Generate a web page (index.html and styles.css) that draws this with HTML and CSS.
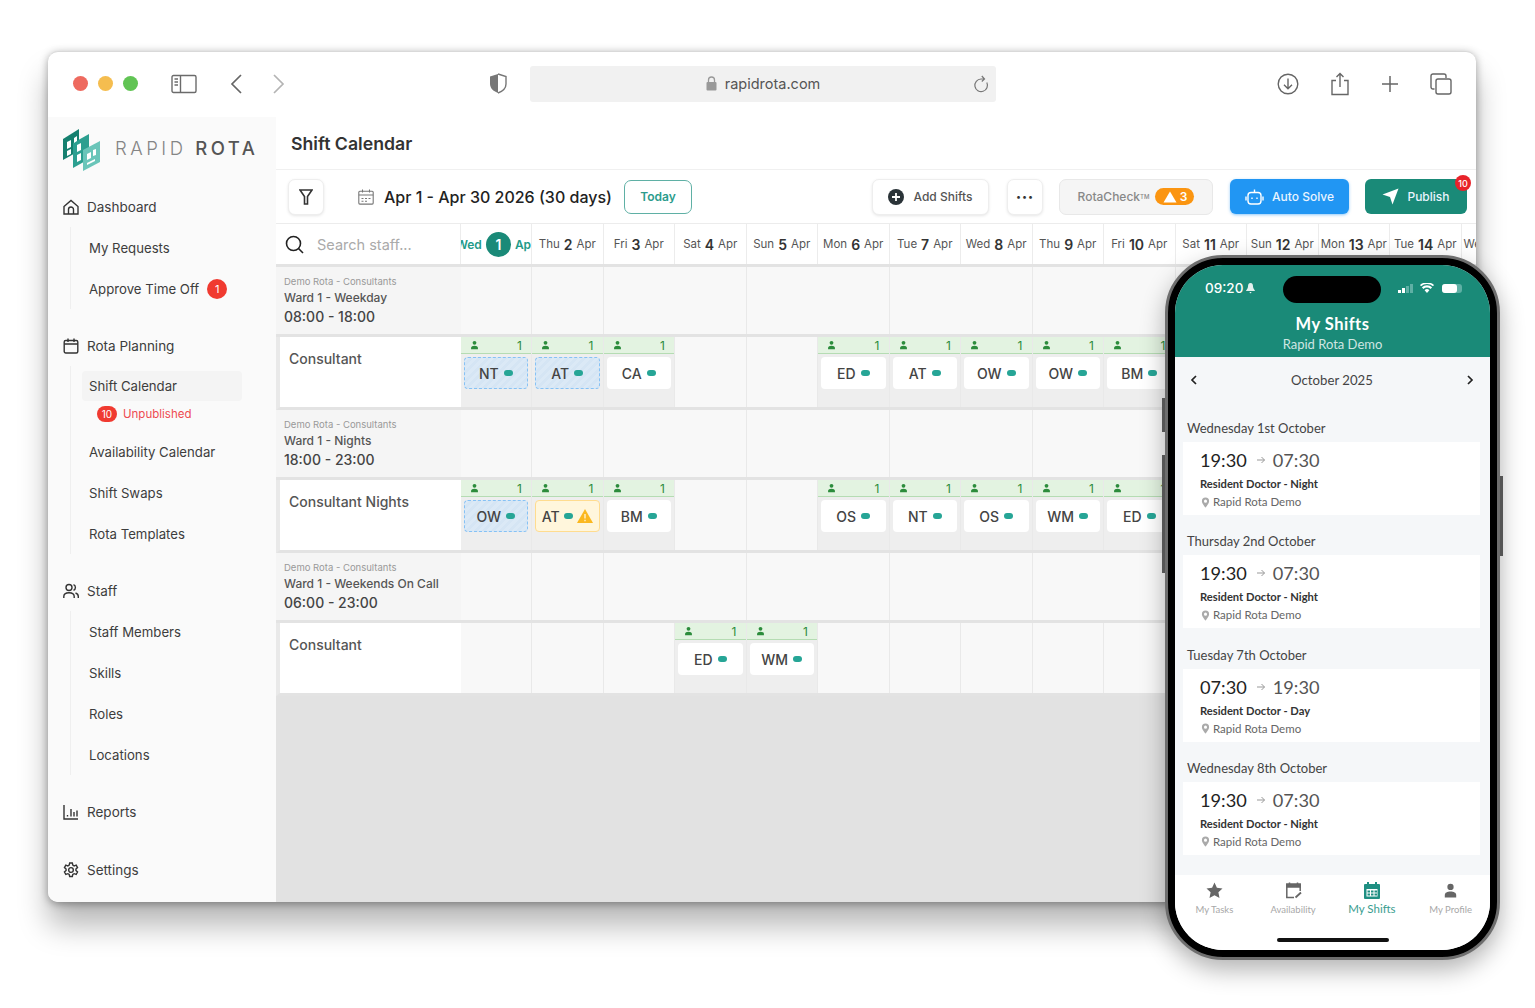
FILE: index.html
```html
<!DOCTYPE html>
<html lang="en">
<head>
  <meta charset="UTF-8">
  <meta name="viewport" content="width=device-width, initial-scale=1.0">
  <title>Rapid Rota - Shift Calendar</title>
  <link rel="stylesheet" href="styles.css">
</head>
<body>

  <!-- shared small icons -->
  <svg class="sprite" aria-hidden="true">
    <symbol id="person" viewBox="0 0 10 10">
      <circle cx="5" cy="2.6" r="2.1"/>
      <path d="M1.2 9.6V8c0-1.5 1.7-2.3 3.8-2.3S8.800 6.500 8.800 8v1.600z"/>
    </symbol>
    <symbol id="pin" viewBox="0 0 10 12">
      <path fill-rule="evenodd" d="M5 .5a4 4 0 0 1 4 4c0 2.800-4 7-4 7s-4-4.200-4-7a4 4 0 0 1 4-4zm0 2.300a1.700 1.700 0 1 0 0 3.400 1.700 1.700 0 0 0 0-3.400z"/>
    </symbol>
    <symbol id="arrow" viewBox="0 0 10 10">
      <path d="M1 5h7.500M5.500 2l3 3-3 3" fill="none" stroke="currentColor" stroke-width="1"/>
    </symbol>
  </svg>

  <div class="page">
    <div class="window">

      <!-- browser bar -->
      <div class="browser-bar">
        <div class="lights">
          <span class="light red"></span>
          <span class="light yellow"></span>
          <span class="light green"></span>
        </div>
        <svg class="bar-icon sidebar-toggle" width="26" height="20" viewBox="0 0 26 20" fill="none" stroke="#6b6b6b" stroke-width="1.400">
          <rect x="1" y="1.500" width="24" height="17" rx="1.500"/>
          <path d="M9.500 1.500v17M3.500 5h3.500M3.500 8h3.500M3.500 11h3.500" />
        </svg>
        <svg class="bar-icon back" width="12" height="20" viewBox="0 0 12 20" fill="none" stroke="#666" stroke-width="1.700">
          <path d="M11 1 2 10l9 9"/>
        </svg>
        <svg class="bar-icon forward" width="12" height="20" viewBox="0 0 12 20" fill="none" stroke="#b4b4b4" stroke-width="1.700">
          <path d="m1 1 9 9-9 9"/>
        </svg>
        <svg class="bar-icon shield" width="18" height="21" viewBox="0 0 18 21">
          <path d="M9 1 1 3.500V11c0 4.500 4 7.500 8 9z" fill="#777"/>
          <path d="M9 1l8 2.500V11c0 4.500-4 7.500-8 9" fill="none" stroke="#777" stroke-width="1.400"/>
        </svg>
        <div class="url-bar">
          <svg width="11" height="15" viewBox="0 0 11 15">
            <path d="M2.500 6.500V4a3 3 0 0 1 6 0v2.500" fill="none" stroke="#999" stroke-width="1.300"/>
            <rect x="0.500" y="6" width="10" height="8.500" rx="1" fill="#999"/>
          </svg>
          <span>rapidrota.com</span>
          <svg class="reload" width="16" height="18" viewBox="0 0 16 18" fill="none" stroke="#777" stroke-width="1.200">
            <path d="M13.800 7.500A6.300 6.300 0 1 1 8 4h3M8.800 1 11.500 4 8.800 6.500"/>
          </svg>
        </div>
        <div class="bar-right">
          <svg width="22" height="22" viewBox="0 0 22 22" fill="none" stroke="#666" stroke-width="1.400">
            <circle cx="11" cy="11" r="9.800"/>
            <path d="M11 5.500v10M7 11.800l4 4 4-4"/>
          </svg>
          <svg width="20" height="24" viewBox="0 0 20 24" fill="none" stroke="#666" stroke-width="1.400">
            <path d="M6 8.500H2v14h16v-14h-4M10 15V1.500M6.500 5 10 1.500 13.500 5"/>
          </svg>
          <svg width="18" height="18" viewBox="0 0 18 18" fill="none" stroke="#666" stroke-width="1.500">
            <path d="M9 1v16M1 9h16"/>
          </svg>
          <svg width="22" height="22" viewBox="0 0 22 22" fill="none" stroke="#666" stroke-width="1.400">
            <path d="M4.500 16H3a2 2 0 0 1-2-2V3a2 2 0 0 1 2-2h11a2 2 0 0 1 2 2v2"/>
            <rect x="6" y="6" width="15" height="15" rx="2"/>
          </svg>
        </div>
      </div>

      <div class="app">

        <!-- sidebar -->
        <aside class="sidebar">
          <div class="brand">
            <svg width="40" height="44" viewBox="0 0 40 44">
              <path d="M1 11 17 1v22L1 32z" fill="#15806f"/>
              <path d="M11 15 27 6v25l-16 9z" fill="#2c9f90"/>
              <path d="M21 22 38 13v21L21 43z" fill="#6ac5b9"/>
              <path d="M5 14l4-2v7l-4 2zM5 23l4-2v5l-4 2zM12 10l3-2v5l-3 2zM15 17l4-2v7l-4 2zM15 27l4-2v7l-4 2zM25 26l4-2v6l-4 2zM25 35l8-4v2l-8 4zM31 22l3-1v6l-3 1z" fill="#fff"/>
            </svg>
            <div class="brand-name">RAPID <b>ROTA</b></div>
          </div>

          <div class="nav-head">
            <svg width="16" height="16" viewBox="0 0 16 16" fill="none" stroke="#333" stroke-width="1.400">
              <path d="M1 7.500 8 1.500l7 6V15H1zM5.500 15v-4.500a2.500 2.500 0 0 1 5 0V15"/>
            </svg>
            <span>Dashboard</span>
          </div>
          <div class="nav-subs">
            <div class="nav-sub">My Requests</div>
            <div class="nav-sub">Approve Time Off <span class="nav-badge">1</span></div>
          </div>

          <div class="nav-head">
            <svg width="16" height="16" viewBox="0 0 16 16" fill="none" stroke="#333" stroke-width="1.400">
              <rect x="1.200" y="2.500" width="13.600" height="12.500" rx="1.500"/>
              <path d="M1.200 6h13.600M5 .5v3.500M11 .5v3.500"/>
            </svg>
            <span>Rota Planning</span>
          </div>
          <div class="nav-subs">
            <div class="nav-sub-block">
              <div class="nav-sub current">Shift Calendar</div>
              <div class="unpublished"><span class="count">10</span> Unpublished</div>
            </div>
            <div class="nav-sub">Availability Calendar</div>
            <div class="nav-sub">Shift Swaps</div>
            <div class="nav-sub">Rota Templates</div>
          </div>

          <div class="nav-head">
            <svg width="16" height="16" viewBox="0 0 16 16" fill="none" stroke="#333" stroke-width="1.400">
              <circle cx="6" cy="4.500" r="3"/>
              <path d="M.800 15v-1.500C.800 11 3 9.700 6 9.700s5.200 1.300 5.200 3.800V15M10.500 1.700a3 3 0 0 1 0 5.600M12.500 10c1.700.6 2.800 1.800 2.800 3.500V15"/>
            </svg>
            <span>Staff</span>
          </div>
          <div class="nav-subs">
            <div class="nav-sub">Staff Members</div>
            <div class="nav-sub">Skills</div>
            <div class="nav-sub">Roles</div>
            <div class="nav-sub">Locations</div>
          </div>

          <div class="nav-head reports">
            <svg width="16" height="16" viewBox="0 0 16 16" fill="none" stroke="#333" stroke-width="1.400">
              <path d="M1 1v14h14M4.500 11v1.500M8 5v7.500M11 8v4.500M14 6.500v6"/>
            </svg>
            <span>Reports</span>
          </div>
          <div class="nav-head">
            <svg width="16" height="16" viewBox="0 0 24 24" fill="none" stroke="#333" stroke-width="2.100">
              <circle cx="12" cy="12" r="3.500"/>
              <path d="M10 1.500h4l.7 3.200 2 1.100 3.100-1 2 3.500-2.400 2.200v2.300l2.400 2.200-2 3.500-3.100-1-2 1.100-.7 3.200h-4l-.7-3.200-2-1.100-3.100 1-2-3.500 2.400-2.200V10.500L2.200 8.300l2-3.500 3.100 1 2-1.100z"/>
            </svg>
            <span>Settings</span>
          </div>
        </aside>

        <main class="main">
          <div class="title-row">Shift Calendar</div>

          <div class="controls">
            <button class="btn filter">
              <svg width="14" height="16" viewBox="0 0 14 16" fill="none" stroke="#333" stroke-width="1.600">
                <path d="M1 1h12L8.500 7.500V15h-3V7.500z"/>
              </svg>
            </button>
            <svg class="date-icon" width="16" height="16" viewBox="0 0 16 16" fill="none" stroke="#777" stroke-width="1.100">
              <rect x="0.800" y="2.300" width="14.400" height="12.800" rx="1"/>
              <path d="M.8 6h14.400M4.500 .5v3M11.500 .5v3M3.500 9.500h2M7 9.500h2M10.500 9.500h2M3.500 12.300h2M7 12.300h2"/>
            </svg>
            <div class="date-range">Apr 1 - Apr 30 2026 (30 days)</div>
            <button class="today">Today</button>
            <button class="btn add-shifts">
              <svg width="16" height="16" viewBox="0 0 16 16">
                <circle cx="8" cy="8" r="8" fill="#2a3338"/>
                <path d="M8 4v8M4 8h8" stroke="#fff" stroke-width="1.800"/>
              </svg>
              Add Shifts
            </button>
            <button class="btn more">&bull;&bull;&bull;</button>
            <button class="rotacheck">RotaCheck<sup>TM</sup>
              <span class="warn-pill">
                <svg width="14" height="12" viewBox="0 0 14 12"><path d="M7 .5 13.500 11.500H.5z" fill="#fff"/></svg>
                3
              </span>
            </button>
            <button class="auto-solve">
              <svg width="19" height="18" viewBox="0 0 19 18" fill="none" stroke="#fff" stroke-width="1.400">
                <rect x="3" y="4.500" width="13" height="11.500" rx="3"/>
                <path d="M9.500 4.500V1.500M1 8.500v4M18 8.500v4M7 9.500v1.500M12 9.500v1.500"/>
              </svg>
              Auto Solve
            </button>
            <button class="publish">
              <svg width="17" height="17" viewBox="0 0 17 17"><path d="M16.500.5 10.500 16.500 8 9 .5 6.500z" fill="#fff"/></svg>
              Publish
              <span class="publish-badge">10</span>
            </button>
          </div>

          <div class="head-row">
            <div class="search">
              <svg width="19" height="19" viewBox="0 0 19 19" fill="none" stroke="#222" stroke-width="1.600">
                <circle cx="8.500" cy="8.500" r="7"/>
                <path d="m13.500 13.500 4.500 4.500"/>
              </svg>
              <span>Search staff...</span>
            </div>
            <div class="day today-col">Wed <b>1</b> Apr</div>
            <div class="day">Thu <b>2</b> Apr</div>
            <div class="day">Fri <b>3</b> Apr</div>
            <div class="day">Sat <b>4</b> Apr</div>
            <div class="day">Sun <b>5</b> Apr</div>
            <div class="day">Mon <b>6</b> Apr</div>
            <div class="day">Tue <b>7</b> Apr</div>
            <div class="day">Wed <b>8</b> Apr</div>
            <div class="day">Thu <b>9</b> Apr</div>
            <div class="day">Fri <b>10</b> Apr</div>
            <div class="day">Sat <b>11</b> Apr</div>
            <div class="day">Sun <b>12</b> Apr</div>
            <div class="day">Mon <b>13</b> Apr</div>
            <div class="day">Tue <b>14</b> Apr</div>
            <div class="day">Wed <b>15</b> Apr</div>
          </div>

          <!-- Ward 1 - Weekday -->
          <div class="ward-row">
            <div class="ward-label">
              <div class="ward-rota">Demo Rota - Consultants</div>
              <div class="ward-name">Ward 1 - Weekday</div>
              <div class="ward-time">08:00 - 18:00</div>
            </div>
            <div class="ward-days"></div>
          </div>
          <div class="shift-row">
            <div class="role">Consultant</div>
            <div class="cell filled">
              <div class="need"><svg><use href="#person"/></svg><span>1</span></div>
              <div class="pill draft">NT <i></i></div>
            </div>
            <div class="cell filled">
              <div class="need"><svg><use href="#person"/></svg><span>1</span></div>
              <div class="pill draft">AT <i></i></div>
            </div>
            <div class="cell filled">
              <div class="need"><svg><use href="#person"/></svg><span>1</span></div>
              <div class="pill">CA <i></i></div>
            </div>
            <div class="cell"></div>
            <div class="cell"></div>
            <div class="cell filled">
              <div class="need"><svg><use href="#person"/></svg><span>1</span></div>
              <div class="pill">ED <i></i></div>
            </div>
            <div class="cell filled">
              <div class="need"><svg><use href="#person"/></svg><span>1</span></div>
              <div class="pill">AT <i></i></div>
            </div>
            <div class="cell filled">
              <div class="need"><svg><use href="#person"/></svg><span>1</span></div>
              <div class="pill">OW <i></i></div>
            </div>
            <div class="cell filled">
              <div class="need"><svg><use href="#person"/></svg><span>1</span></div>
              <div class="pill">OW <i></i></div>
            </div>
            <div class="cell filled">
              <div class="need"><svg><use href="#person"/></svg><span>1</span></div>
              <div class="pill">BM <i></i></div>
            </div>
          </div>

          <!-- Ward 1 - Nights -->
          <div class="ward-row">
            <div class="ward-label">
              <div class="ward-rota">Demo Rota - Consultants</div>
              <div class="ward-name">Ward 1 - Nights</div>
              <div class="ward-time">18:00 - 23:00</div>
            </div>
            <div class="ward-days"></div>
          </div>
          <div class="shift-row">
            <div class="role">Consultant Nights</div>
            <div class="cell filled">
              <div class="need"><svg><use href="#person"/></svg><span>1</span></div>
              <div class="pill draft">OW <i></i></div>
            </div>
            <div class="cell filled">
              <div class="need"><svg><use href="#person"/></svg><span>1</span></div>
              <div class="pill warning">AT <i></i>
                <svg width="16" height="14" viewBox="0 0 16 14">
                  <path d="M8 0 16 14H0z" fill="#fbb81f"/>
                  <path d="M8 5v4.500M8 10.800v1.400" stroke="#fff6dc" stroke-width="1.300"/>
                </svg>
              </div>
            </div>
            <div class="cell filled">
              <div class="need"><svg><use href="#person"/></svg><span>1</span></div>
              <div class="pill">BM <i></i></div>
            </div>
            <div class="cell"></div>
            <div class="cell"></div>
            <div class="cell filled">
              <div class="need"><svg><use href="#person"/></svg><span>1</span></div>
              <div class="pill">OS <i></i></div>
            </div>
            <div class="cell filled">
              <div class="need"><svg><use href="#person"/></svg><span>1</span></div>
              <div class="pill">NT <i></i></div>
            </div>
            <div class="cell filled">
              <div class="need"><svg><use href="#person"/></svg><span>1</span></div>
              <div class="pill">OS <i></i></div>
            </div>
            <div class="cell filled">
              <div class="need"><svg><use href="#person"/></svg><span>1</span></div>
              <div class="pill">WM <i></i></div>
            </div>
            <div class="cell filled">
              <div class="need"><svg><use href="#person"/></svg><span>1</span></div>
              <div class="pill">ED <i></i></div>
            </div>
          </div>

          <!-- Ward 1 - Weekends On Call -->
          <div class="ward-row">
            <div class="ward-label">
              <div class="ward-rota">Demo Rota - Consultants</div>
              <div class="ward-name">Ward 1 - Weekends On Call</div>
              <div class="ward-time">06:00 - 23:00</div>
            </div>
            <div class="ward-days"></div>
          </div>
          <div class="shift-row">
            <div class="role">Consultant</div>
            <div class="cell"></div>
            <div class="cell"></div>
            <div class="cell"></div>
            <div class="cell filled">
              <div class="need"><svg><use href="#person"/></svg><span>1</span></div>
              <div class="pill">ED <i></i></div>
            </div>
            <div class="cell filled">
              <div class="need"><svg><use href="#person"/></svg><span>1</span></div>
              <div class="pill">WM <i></i></div>
            </div>
            <div class="cell"></div>
            <div class="cell"></div>
            <div class="cell"></div>
            <div class="cell"></div>
            <div class="cell"></div>
          </div>

          <div class="grid-rest"></div>
        </main>
      </div>
    </div>

    <!-- phone mockup over the window -->
    <div class="phone">
      <span class="side-btn left one"></span>
      <span class="side-btn left two"></span>
      <span class="side-btn right three"></span>
      <div class="screen">
        <div class="phone-head">
          <div class="status">
            <span class="clock">09:20</span>
            <svg class="bell" width="11" height="12" viewBox="0 0 11 12">
              <path d="M5.500 1C3.500 1 3 2.800 3 4.500 3 6.500 1 8 1 9h9c0-1-2-2.500-2-4.500C8 2.800 7.500 1 5.500 1zM4.300 10h2.400l-1.200 1.500z" fill="#e3f0ee"/>
            </svg>
            <span class="island"></span>
            <svg class="signal" width="16" height="9" viewBox="0 0 16 9">
              <rect x="0" y="6" width="3" height="3" fill="#fff"/>
              <rect x="4" y="4" width="3" height="5" fill="#fff"/>
              <rect x="8" y="2" width="3" height="7" fill="#5fb0a5"/>
              <rect x="12" y="0" width="3" height="9" fill="#5fb0a5"/>
            </svg>
            <svg class="wifi" width="14" height="10" viewBox="0 0 14 10">
              <path d="M7 10 4.600 7.200a3.500 3.500 0 0 1 4.800 0zM3.400 6 1.900 4.300a7.500 7.500 0 0 1 10.200 0L10.600 6a5.200 5.200 0 0 0-7.200 0zM1 3.300 0 2a10.500 10.500 0 0 1 14 0l-1 1.300a9 9 0 0 0-12 0z" fill="#fff"/>
            </svg>
            <span class="battery"><span></span></span>
          </div>
          <div class="phone-title">My Shifts</div>
          <div class="phone-sub">Rapid Rota Demo</div>
        </div>

        <div class="month-row">
          <svg width="7" height="10" viewBox="0 0 7 10" fill="none" stroke="#222" stroke-width="1.700"><path d="M6 1 2 5l4 4"/></svg>
          <span>October 2025</span>
          <svg width="7" height="10" viewBox="0 0 7 10" fill="none" stroke="#222" stroke-width="1.700"><path d="m1 1 4 4-4 4"/></svg>
        </div>

        <div class="shift-day">
          <div class="day-label">Wednesday 1st October</div>
          <div class="shift-card">
            <div class="times"><b>19:30</b><svg><use href="#arrow"/></svg><span>07:30</span></div>
            <div class="shift-role">Resident Doctor - Night</div>
            <div class="shift-place"><svg><use href="#pin"/></svg>Rapid Rota Demo</div>
          </div>
        </div>
        <div class="shift-day">
          <div class="day-label">Thursday 2nd October</div>
          <div class="shift-card">
            <div class="times"><b>19:30</b><svg><use href="#arrow"/></svg><span>07:30</span></div>
            <div class="shift-role">Resident Doctor - Night</div>
            <div class="shift-place"><svg><use href="#pin"/></svg>Rapid Rota Demo</div>
          </div>
        </div>
        <div class="shift-day">
          <div class="day-label">Tuesday 7th October</div>
          <div class="shift-card">
            <div class="times"><b>07:30</b><svg><use href="#arrow"/></svg><span>19:30</span></div>
            <div class="shift-role">Resident Doctor - Day</div>
            <div class="shift-place"><svg><use href="#pin"/></svg>Rapid Rota Demo</div>
          </div>
        </div>
        <div class="shift-day">
          <div class="day-label">Wednesday 8th October</div>
          <div class="shift-card">
            <div class="times"><b>19:30</b><svg><use href="#arrow"/></svg><span>07:30</span></div>
            <div class="shift-role">Resident Doctor - Night</div>
            <div class="shift-place"><svg><use href="#pin"/></svg>Rapid Rota Demo</div>
          </div>
        </div>

        <div class="tabs">
          <div class="tab">
            <svg width="17" height="17" viewBox="0 0 17 17"><path d="m8.500.5 2.400 5.200 5.600.7-4.100 3.900 1.100 5.700-5-2.800-5 2.800 1.100-5.700L.5 6.400l5.600-.7z" fill="#666"/></svg>
            <span>My Tasks</span>
          </div>
          <div class="tab">
            <svg width="17" height="17" viewBox="0 0 17 17" fill="none" stroke="#666" stroke-width="1.500">
              <path d="M9 15.500H1.800V3h13.400v6"/>
              <path d="M1.800 2h13.400v3H1.800z" fill="#666"/>
              <path d="M4.500 .5v2M12.500 .5v2"/>
              <path d="m10.500 15.500 5.500-5" stroke-width="1.800"/>
            </svg>
            <span>Availability</span>
          </div>
          <div class="tab active">
            <svg width="16" height="17" viewBox="0 0 16 17">
              <path d="M3 0h2v2h6V0h2v2h2a1 1 0 0 1 1 1v13a1 1 0 0 1-1 1H1a1 1 0 0 1-1-1V3a1 1 0 0 1 1-1h2z" fill="#1f8f82"/>
              <path d="M2.500 7h11v7.500h-11z" fill="#fff"/>
              <path d="M3.500 8.500h2.500v2H3.500zM7 8.500h2.500v2H7zM10.500 8.500H13v2h-2.500zM3.500 11.500h2.500v2H3.500zM7 11.500h2.500v2H7zM10.500 11.500H13v2h-2.500z" fill="#1f8f82"/>
            </svg>
            <span>My Shifts</span>
          </div>
          <div class="tab">
            <svg width="15" height="15" viewBox="0 0 10 10" fill="#666"><use href="#person"/></svg>
            <span>My Profile</span>
          </div>
          <span class="home-line"></span>
        </div>
      </div>
    </div>
  </div>

</body>
</html>
```

FILE: styles.css
```css
* {
  box-sizing: border-box;
}

body {
  margin: 0;
  background: #ffffff;
  font-family: 'Inter', 'Liberation Sans', sans-serif;
  color: #333333;
}

button {
  font-family: inherit;
  cursor: pointer;
}

.sprite {
  display: none;
}

.page {
  position: relative;
  height: 1008px;
  padding: 51px 0 0 48px;
  overflow: hidden;
}

.window {
  width: 1428px;
  height: 851px;
  display: flex;
  flex-direction: column;
  background: #ffffff;
  border-top: 1px solid #d9d9d9;
  border-radius: 10px;
  overflow: hidden;
  box-shadow: 0 24px 30px rgba(0, 0, 0, 0.28), 0 2px 8px rgba(0, 0, 0, 0.35);
}

/* Browser bar */
.browser-bar {
  height: 65px;
  flex: none;
  display: flex;
  align-items: center;
  padding: 0 0 2px 25px;
}

.lights {
  display: flex;
  gap: 10px;
}

.light {
  width: 15px;
  height: 15px;
  border-radius: 50%;
}

.light.red { background: #ee6a5f; }
.light.yellow { background: #f5bd4f; }
.light.green { background: #61c454; }

.sidebar-toggle { margin-left: 33px; }
.back { margin-left: 33px; }
.forward { margin-left: 31px; }
.shield { margin-left: 204px; }

.url-bar {
  position: relative;
  width: 466px;
  height: 36px;
  margin-left: 23px;
  display: flex;
  align-items: center;
  justify-content: center;
  gap: 8px;
  background: #f1f1f1;
  border-radius: 3px;
  font-size: 14.5px;
  color: #555555;
}

.reload {
  position: absolute;
  right: 7px;
  top: 9px;
}

.bar-right {
  display: flex;
  align-items: center;
  margin-left: 281px;
  gap: 31px;
}

.app {
  flex: 1;
  display: flex;
  min-height: 0;
}

/* Sidebar */
.sidebar {
  width: 228px;
  flex: none;
  background: #fafafa;
  padding: 0 14px;
}

.brand {
  height: 70px;
  display: flex;
  align-items: flex-start;
  gap: 13px;
  padding-top: 11px;
}

.brand svg {
  flex: none;
}

.brand-name {
  font-size: 18.500px;
  letter-spacing: 3.500px;
  color: #858585;
  font-weight: 300;
  white-space: nowrap;
  padding-top: 9px;
}

.brand-name b {
  font-weight: 500;
  color: #555555;
}

.nav-head {
  height: 40px;
  display: flex;
  align-items: center;
  gap: 8px;
  padding-left: 1px;
  font-size: 13.500px;
  color: #3d3d3d;
}

.nav-head.reports {
  margin-bottom: 18px;
}

.nav-subs {
  margin: 0 0 17px 8px;
  padding-left: 18px;
  border-left: 1px solid #efefef;
}

.nav-sub {
  height: 41px;
  display: flex;
  align-items: center;
  gap: 8px;
  font-size: 13.200px;
  color: #3d3d3d;
  white-space: nowrap;
}

.nav-badge {
  width: 20px;
  height: 20px;
  display: flex;
  align-items: center;
  justify-content: center;
  background: #f03a30;
  color: #ffffff;
  border-radius: 50%;
  font-size: 11px;
}

.nav-sub-block {
  height: 65px;
  padding-top: 5px;
}

.nav-sub.current {
  height: 30px;
  margin-left: -7px;
  padding-left: 7px;
  width: 160px;
  background: #f4f4f4;
  border-radius: 4px;
}

.unpublished {
  display: flex;
  align-items: center;
  gap: 6px;
  margin: 5px 0 0 8px;
  font-size: 11.500px;
  color: #ee4a50;
}

.count {
  width: 20px;
  height: 16px;
  display: flex;
  align-items: center;
  justify-content: center;
  background: #f03a30;
  color: #ffffff;
  border-radius: 8px;
  font-size: 10px;
}

/* Main column */
.main {
  flex: 1;
  min-width: 0;
  display: flex;
  flex-direction: column;
  overflow: hidden;
}

.title-row {
  height: 53px;
  flex: none;
  padding: 0 0 0 15px;
  display: flex;
  align-items: center;
  font-size: 17.700px;
  font-weight: 600;
  color: #333333;
  border-bottom: 1px solid #f0f0f0;
}

.controls {
  height: 54px;
  flex: none;
  display: flex;
  align-items: center;
  padding-left: 12px;
  border-bottom: 1px solid #ececec;
}

.btn {
  height: 36px;
  display: flex;
  align-items: center;
  justify-content: center;
  background: #ffffff;
  border: 1px solid #eeeeee;
  border-radius: 7px;
  box-shadow: 0 1px 3px rgba(0, 0, 0, 0.1);
}

.filter {
  width: 36px;
}

.date-icon {
  margin-left: 34px;
}

.date-range {
  margin-left: 10px;
  font-size: 16px;
  font-weight: 500;
  color: #222222;
  white-space: nowrap;
  width: 240px;
}

.today {
  width: 68px;
  height: 34px;
  background: #ffffff;
  border: 1.500px solid #5fb0a5;
  border-radius: 7px;
  color: #2c9c8c;
  font-size: 12px;
  font-weight: 600;
}

.add-shifts {
  width: 117px;
  margin-left: 180px;
  gap: 9px;
  font-size: 12px;
  font-weight: 500;
  color: #555555;
}

.more {
  width: 36px;
  margin-left: 18px;
  font-size: 9px;
  letter-spacing: 1px;
  color: #333333;
}

.rotacheck {
  width: 154px;
  height: 36px;
  margin-left: 16px;
  display: flex;
  align-items: center;
  justify-content: center;
  gap: 0;
  background: #f5f5f5;
  border: 1px solid #e8e8e8;
  border-radius: 7px;
  font-size: 12px;
  font-weight: 500;
  color: #888888;
}

.rotacheck sup {
  font-size: 6px;
  margin-right: 6px;
}

.warn-pill {
  width: 39px;
  height: 17px;
  display: flex;
  align-items: center;
  justify-content: center;
  gap: 3px;
  background: #fb9511;
  color: #ffffff;
  border-radius: 9px;
  font-weight: 600;
}

.auto-solve,
.publish {
  position: relative;
  height: 35px;
  display: flex;
  align-items: center;
  justify-content: center;
  gap: 8px;
  border: none;
  border-radius: 6px;
  color: #e9f4ff;
  font-size: 12px;
  font-weight: 500;
}

.auto-solve {
  width: 119px;
  margin-left: 17px;
  background: #2196f3;
  box-shadow: 0 1px 3px rgba(33, 150, 243, 0.5);
}

.publish {
  width: 102px;
  margin-left: 16px;
  background: #1a8a78;
}

.publish-badge {
  position: absolute;
  right: -4px;
  top: -4px;
  width: 16px;
  height: 16px;
  display: flex;
  align-items: center;
  justify-content: center;
  background: #e8232a;
  border-radius: 50%;
  color: #ffffff;
  font-size: 9px;
}

/* Calendar grid */
.head-row {
  height: 43px;
  flex: none;
  display: flex;
  background: #ffffff;
  border-bottom: 3px solid #e3e3e3;
}

.search {
  width: 184.500px;
  flex: none;
  display: flex;
  align-items: center;
  gap: 13px;
  padding-left: 9px;
  border-right: 1px solid #ececec;
  font-size: 14.500px;
  color: #aaaaaa;
}

.day {
  width: 71.500px;
  flex: none;
  display: flex;
  align-items: center;
  justify-content: center;
  gap: 4px;
  border-right: 1px solid #ececec;
  font-size: 11.500px;
  color: #555555;
  white-space: nowrap;
  overflow: hidden;
}

.day b {
  font-size: 14px;
  font-weight: 600;
  color: #333333;
}

.today-col {
  color: #239a89;
  font-weight: 600;
  font-size: 12px;
}

.today-col b {
  flex: none;
  width: 25px;
  height: 25px;
  display: flex;
  align-items: center;
  justify-content: center;
  background: #1a8a78;
  color: #ffffff;
  border-radius: 50%;
}

.ward-row {
  height: 70px;
  flex: none;
  display: flex;
  border-bottom: 3px solid #e3e3e3;
}

.ward-label {
  width: 184.500px;
  flex: none;
  padding: 9px 0 0 8px;
  background: #f5f5f5;
}

.ward-rota {
  font-size: 9.500px;
  color: #999999;
  line-height: 12px;
}

.ward-name {
  font-size: 12px;
  font-weight: 500;
  color: #555555;
  line-height: 18px;
  margin-top: 1px;
}

.ward-time {
  font-size: 14px;
  font-weight: 500;
  color: #444444;
  line-height: 20px;
}

.ward-days {
  flex: 1;
  background: repeating-linear-gradient(to right, #f8f8f8 0, #f8f8f8 70.500px, #e9e9e9 70.500px, #e9e9e9 71.500px);
}

.shift-row {
  height: 73px;
  flex: none;
  display: flex;
  border-left: 4px solid #e9e9e9;
  border-bottom: 3px solid #e3e3e3;
  background: #f8f8f8;
}

.role {
  width: 180.500px;
  flex: none;
  padding: 13px 0 0 9px;
  background: #ffffff;
  font-size: 14px;
  font-weight: 500;
  color: #555555;
  white-space: nowrap;
}

.cell {
  width: 71.500px;
  flex: none;
  border-right: 1px solid #e9e9e9;
}

.cell.filled {
  background: #eeeeee;
}

.need {
  height: 17px;
  display: flex;
  align-items: center;
  justify-content: space-between;
  padding: 0 9px 0 9px;
  background: #e3f3e1;
  border-bottom: 1px solid #b5dcb3;
  color: #2c8c3c;
  font-size: 12px;
}

.need svg {
  width: 9px;
  height: 10px;
  fill: #2c8c3c;
}

.pill {
  height: 32px;
  margin: 3px 3px 0 3px;
  display: flex;
  align-items: center;
  justify-content: center;
  gap: 5px;
  background: #ffffff;
  border-radius: 4px;
  font-size: 14px;
  font-weight: 500;
  color: #444444;
}

.pill i {
  width: 9px;
  height: 6px;
  border-radius: 3px;
  background: #26a596;
}

.pill.draft {
  background: repeating-linear-gradient(135deg, #dbe9f6 0, #dbe9f6 3px, #d5e5f4 3px, #d5e5f4 6px);
  border: 1.500px dashed #86c2f5;
}

.pill.warning {
  background: #fff6dc;
  border: 1.500px solid #ffdc8f;
  gap: 4px;
}

.grid-rest {
  flex: 1;
  background: #e2e2e2;
}

/* Phone */
.phone {
  position: absolute;
  left: 1165px;
  top: 255px;
  width: 335px;
  height: 705px;
  padding: 7px;
  background: #000000;
  border: 3px solid #6e6e6e;
  border-radius: 58px;
  box-shadow: 0 10px 24px rgba(0, 0, 0, 0.3);
}

.side-btn {
  position: absolute;
  width: 3px;
  background: #555555;
}

.side-btn.left {
  left: -6px;
}

.side-btn.one {
  top: 140px;
  height: 34px;
}

.side-btn.two {
  top: 197px;
  height: 118px;
}

.side-btn.three {
  right: -6px;
  top: 218px;
  height: 80px;
}

.screen {
  height: 100%;
  display: flex;
  flex-direction: column;
  overflow: hidden;
  background: #f5f7f9;
  border-radius: 48px;
  font-family: 'Lato', 'Liberation Sans', sans-serif;
}

.phone-head {
  height: 92px;
  flex: none;
  background: #1a8a78;
  color: #ffffff;
  text-align: center;
}

.status {
  position: relative;
  height: 46px;
  display: flex;
  align-items: center;
  padding: 0 28px 0 30px;
  font-size: 14px;
}

.clock {
  font-family: 'Inter', sans-serif;
  font-size: 13.500px;
  font-weight: 500;
}

.bell {
  margin-left: 2px;
}

.island {
  position: absolute;
  left: 108px;
  top: 11px;
  width: 98px;
  height: 27px;
  background: #000000;
  border-radius: 14px;
}

.signal {
  margin-left: auto;
}

.wifi {
  margin-left: 6px;
}

.battery {
  width: 20px;
  height: 9px;
  margin-left: 8px;
  border-radius: 3px;
  background: #5fb0a5;
}

.battery span {
  display: block;
  width: 15px;
  height: 9px;
  border-radius: 3px;
  background: #ffffff;
}

.phone-title {
  font-size: 16.500px;
  font-weight: 700;
  letter-spacing: 0.5px;
  line-height: 21px;
  margin-top: 3px;
}

.phone-sub {
  font-size: 13px;
  color: #cfe6e2;
  line-height: 18px;
}

.month-row {
  height: 46px;
  flex: none;
  display: flex;
  align-items: center;
  justify-content: space-between;
  padding: 0 16px 0 15px;
  margin-bottom: 15px;
  font-size: 13.200px;
  color: #444444;
}

.shift-day {
  flex: none;
  margin-bottom: 16.330px;
}

.day-label {
  height: 20px;
  margin-bottom: 4px;
  padding-left: 12px;
  line-height: 20px;
  font-size: 13px;
  color: #444444;
}

.shift-card {
  height: 73px;
  margin: 0 10px 0 8px;
  padding: 6px 0 0 17px;
  background: #ffffff;
}

.times {
  display: flex;
  align-items: center;
  height: 24px;
  font-size: 18.200px;
  color: #333333;
}

.times b {
  font-weight: 400;
  color: #222222;
}

.times span {
  font-weight: 400;
  color: #555555;
}

.times svg {
  width: 10px;
  height: 10px;
  margin: 0 7px 0 9px;
  color: #999999;
}

.shift-role {
  font-size: 11.200px;
  font-weight: 700;
  color: #333333;
  line-height: 18px;
  margin-top: 3px;
}

.shift-place {
  display: flex;
  align-items: center;
  gap: 3px;
  padding-left: 1px;
  font-size: 11.500px;
  color: #666666;
  line-height: 18px;
}

.shift-place svg {
  width: 9px;
  height: 11px;
  fill: #aaaaaa;
}

.tabs {
  position: relative;
  margin-top: auto;
  height: 75px;
  flex: none;
  display: flex;
  background: #ffffff;
  padding-top: 7px;
}

.tab {
  width: 25%;
  display: flex;
  flex-direction: column;
  align-items: center;
  gap: 5px;
  font-size: 9.500px;
  color: #a8a8a8;
}

.tab svg {
  height: 17px;
}

.tab.active {
  font-size: 11.500px;
  gap: 3px;
  color: #3a9d8f;
}

.home-line {
  position: absolute;
  left: 102px;
  bottom: 8px;
  width: 112px;
  height: 4px;
  background: #111111;
  border-radius: 2px;
}
```
